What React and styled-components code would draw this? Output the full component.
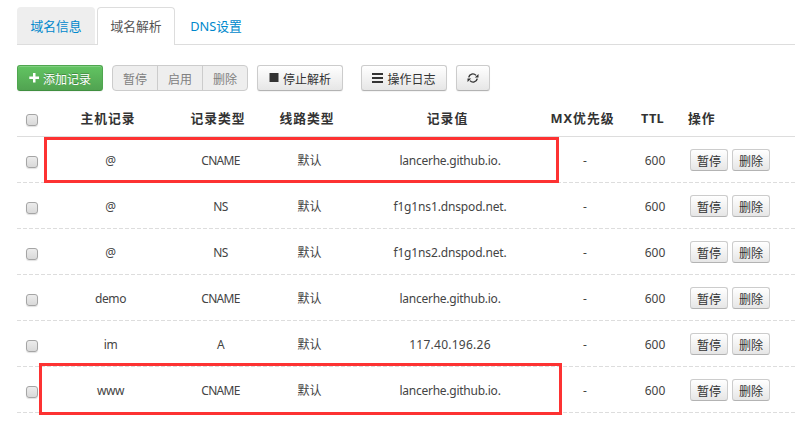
import React from 'react';
import styled, { createGlobalStyle, css } from 'styled-components';

const GlobalStyle = createGlobalStyle`
  *, *::before, *::after { box-sizing: border-box; }
  body {
    margin: 0;
    background: #fff;
    color: #444;
    font: 12px/18px "Noto Sans", "Noto Sans CJK SC", sans-serif;
  }
`;

const Page = styled.main`
  width: 808px;
  height: 427px;
  padding: 7px 13px 0 17px;
  overflow: hidden;
`;

const TabBar = styled.nav`
  display: flex;
  gap: 2px;
  height: 38px;
  border-bottom: 1px solid #ddd;
`;

const Tab = styled.a`
  width: 78px;
  height: ${(p) => (p.$active ? '38px' : '37px')};
  padding-top: 1px;
  border: 1px solid ${(p) => (p.$active ? '#ddd' : 'transparent')};
  border-bottom: 0;
  border-radius: 4px 4px 0 0;
  background: ${(p) => (p.$active ? '#fff' : p.$filled ? '#eee' : 'transparent')};
  color: ${(p) => (p.$active ? '#555' : '#0088cc')};
  font-size: 12.8px;
  line-height: 35px;
  text-align: center;
  white-space: nowrap;
`;

const Toolbar = styled.div`
  display: flex;
  gap: 9px;
  margin-top: 20px;
  height: 26px;
`;

const variants = {
  plain: css`
    border-color: #ccc #ccc #b3b3b3;
    background: linear-gradient(#fff, #e6e6e6);
    color: #333;
  `,
  primary: css`
    border-color: #4fa64f #4fa64f #408f40;
    background: linear-gradient(#62c462, #51a351);
    color: #fff;
    text-shadow: 0 -1px 0 rgba(0, 0, 0, 0.25);
  `,
};

const Button = styled.button`
  display: flex;
  align-items: center;
  justify-content: center;
  gap: 4px;
  width: ${(p) => p.$width}px;
  height: 26px;
  margin: 0 ${(p) => p.$gapAfter || 0}px 0 0;
  padding: 0;
  border: 1px solid;
  border-radius: 3px;
  box-shadow: inset 0 1px 0 rgba(255, 255, 255, 0.2), 0 1px 1px rgba(0, 0, 0, 0.05);
  font: inherit;
  line-height: 24px;
  white-space: nowrap;
  ${(p) => variants[p.$variant || 'plain']}
`;

const Label = styled.span`
  padding-top: 3px;
  line-height: 21px;
`;

const ButtonGroup = styled.div`
  display: flex;
  width: 136px;
  border: 1px solid #ccc;
  border-radius: 4px;
  background: #eee;
`;

const GroupButton = styled.button`
  flex: 1;
  padding: 3px 0 0;
  border: 0;
  border-left: 1px solid #ccc;
  background: none;
  color: #808080;
  font: inherit;
  line-height: 21px;
  &:first-child { border-left: 0; }
`;

const SmallButton = styled.button`
  width: 38px;
  height: 22px;
  padding: 3px 0 0;
  border: 1px solid;
  border-radius: 3px;
  font: inherit;
  line-height: 17px;
  ${variants.plain}
`;

const Table = styled.section`
  margin-top: 9px;
`;

const columns = css`
  display: grid;
  grid-template-columns: 30px 127px 93px 85px 196px 74px 66px 107px;
  align-items: center;
`;

const HeaderRow = styled.div`
  ${columns}
  height: 37px;
  border-bottom: 1px solid #ddd;
  color: #333;
  font-size: 12.8px;
  font-weight: 700;
  letter-spacing: 1px;
`;

const HeaderCell = styled.div`
  padding: 0 ${(p) => (p.$left ? 0 : 5)}px 1px 0;
  text-align: ${(p) => (p.$left ? 'left' : 'center')};
  white-space: nowrap;
  letter-spacing: ${(p) => (p.$latin ? '0.3px' : 'inherit')};
`;

const Row = styled.div`
  ${columns}
  position: relative;
  height: 46px;
  padding-bottom: 1px;
  background: repeating-linear-gradient(90deg, #ddd 0 4px, transparent 4px 6px) left bottom / 100% 1px no-repeat;
`;

const Cell = styled.div`
  padding-top: 2px;
  text-align: center;
  letter-spacing: ${(p) => p.$spacing || 0}px;
  white-space: nowrap;
`;

const Actions = styled.div`
  display: flex;
  gap: 4px;
  padding-left: 2px;
`;

const Checkbox = styled.input.attrs({ type: 'checkbox' })`
  appearance: none;
  width: 12px;
  height: 12px;
  margin: 4px 0 0 9px;
  border: 1px solid #a5a5a5;
  border-radius: 3px;
  background: linear-gradient(#ececec, #d9d9d9);
  box-shadow: 0 1px 1px rgba(0, 0, 0, 0.12);
`;

const Highlight = styled.span`
  position: absolute;
  top: ${(p) => (p.$large ? -4 : 0)}px;
  left: ${(p) => (p.$large ? 22 : 27)}px;
  width: ${(p) => (p.$large ? 523 : 515)}px;
  height: ${(p) => (p.$large ? 52 : 46)}px;
  border: 3px solid #fd3232;
  pointer-events: none;
`;

const Icon = styled.svg`
  display: block;
  flex: none;
  fill: currentColor;
`;

const PlusIcon = () => (
  <Icon width="10" height="10" viewBox="0 0 10 10">
    <path d="M4 0h2.500v3.500H10v2.500H6.500V9.500H4V6H.3V3.500H4z" />
  </Icon>
);

const StopIcon = () => (
  <Icon width="10" height="10" viewBox="0 0 10 10">
    <path d="M.5 0h9v9h-9z" />
  </Icon>
);

const ListIcon = () => (
  <Icon width="11" height="10" viewBox="0 0 11 10">
    <path d="M0 0h11v2H0zM0 4h11v2H0zM0 8h11v2H0z" />
  </Icon>
);

const RefreshIcon = () => (
  <Icon width="12" height="10" viewBox="0 0 12 10">
    <path
      d="M1.700 4.300A4.200 4.200 0 0 1 9 2.400M10.300 5.700A4.200 4.200 0 0 1 3 7.600"
      fill="none"
      stroke="currentColor"
      strokeWidth="1.400"
    />
    <path d="M11.500 1v3.500H7.800zM.5 9V5.500h3.700z" />
  </Icon>
);

const headings = ['主机记录', '记录类型', '线路类型', '记录值', 'MX优先级', 'TTL'];

const records = [
  { host: '@', type: 'CNAME', value: 'lancerhe.github.io.', mark: 'normal' },
  { host: '@', type: 'NS', value: 'f1g1ns1.dnspod.net.' },
  { host: '@', type: 'NS', value: 'f1g1ns2.dnspod.net.' },
  { host: 'demo', type: 'CNAME', value: 'lancerhe.github.io.' },
  { host: 'im', type: 'A', value: '117.40.196.26' },
  { host: 'www', type: 'CNAME', value: 'lancerhe.github.io.', mark: 'large' },
];

const valueSpacing = (value) => {
  if (/^[\d.]+$/.test(value)) return 0.25;
  return /\d/.test(value) ? -0.15 : -0.25;
};

export default function App() {
  return (
    <Page>
      <GlobalStyle />
      <TabBar>
        <Tab $filled>域名信息</Tab>
        <Tab $active>域名解析</Tab>
        <Tab>DNS设置</Tab>
      </TabBar>
      <Toolbar>
        <Button $width={86} $variant="primary"><PlusIcon /><Label>添加记录</Label></Button>
        <ButtonGroup>
          <GroupButton>暂停</GroupButton>
          <GroupButton>启用</GroupButton>
          <GroupButton>删除</GroupButton>
        </ButtonGroup>
        <Button $width={86} $gapAfter={9}><StopIcon /><Label>停止解析</Label></Button>
        <Button $width={86}><ListIcon /><Label>操作日志</Label></Button>
        <Button $width={34} aria-label="刷新"><RefreshIcon /></Button>
      </Toolbar>
      <Table>
        <HeaderRow>
          <Checkbox />
          {headings.map((title) => (
            <HeaderCell key={title} $latin={title === 'TTL'}>{title}</HeaderCell>
          ))}
          <HeaderCell $left>操作</HeaderCell>
        </HeaderRow>
        {records.map((record, index) => (
          <Row key={index}>
            <Checkbox />
            <Cell $spacing={-0.4}>{record.host}</Cell>
            <Cell $spacing={-0.7}>{record.type}</Cell>
            <Cell>默认</Cell>
            <Cell $spacing={valueSpacing(record.value)}>{record.value}</Cell>
            <Cell>-</Cell>
            <Cell>600</Cell>
            <Actions>
              <SmallButton>暂停</SmallButton>
              <SmallButton>删除</SmallButton>
            </Actions>
            {record.mark && <Highlight $large={record.mark === 'large'} />}
          </Row>
        ))}
      </Table>
    </Page>
  );
}
